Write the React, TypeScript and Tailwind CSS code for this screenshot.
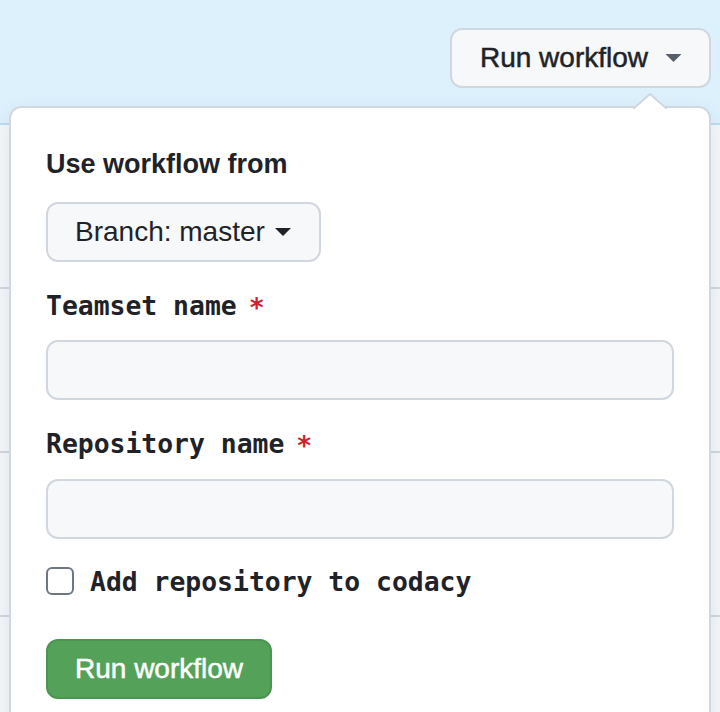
import React from "react";

const sans = { fontFamily: '"Liberation Sans", Arial, sans-serif' };
const mono = { fontFamily: '"DejaVu Sans Mono", "Liberation Mono", monospace' };

function Caret({ className }: { className?: string }) {
  return (
    <svg viewBox="0 0 16 8" className={className} aria-hidden="true">
      <path d="M0 0 L16 0 L8 8 Z" fill="currentColor" />
    </svg>
  );
}

function Label({ text }: { text: string }) {
  return (
    <div className="flex items-center h-[40px] text-[26.4px] font-bold text-[#1f2328]" style={mono}>
      <span>{text}</span>
      <span className="ml-[12px] mt-[3px] text-[#cf222e]">*</span>
    </div>
  );
}

export default function App() {
  return (
    <div className="relative w-[720px] h-[712px] overflow-hidden bg-[#f6f8fa]" style={sans}>
      {/* header band */}
      <div className="h-[125px] bg-[#ddf1fd] border-b-2 border-[#b9dcf5] flex justify-end items-start pt-[28px] pr-[9px]">
        <button className="h-[60px] flex items-center gap-[17px] pl-[28px] pr-[27px] rounded-[12px] border-2 border-[#d0d7de] bg-[#f6f8fa] text-[28px] text-[#1f2328] [-webkit-text-stroke:0.5px_#1f2328]">
          <span>Run workflow</span>
          <Caret className="w-[17px] h-[8px] text-[#57606a]" />
        </button>
      </div>
      {/* background rows */}
      <div className="h-[164px] border-b-2 border-[#d0d7de]" />
      <div className="h-[164px] border-b-2 border-[#d0d7de]" />
      <div className="h-[164px] border-b-2 border-[#d0d7de]" />

      {/* popover */}
      <div className="absolute left-[9px] top-[106px] w-[702px] h-[660px] bg-white border-2 border-[#d0d7de] rounded-[12px] shadow-[0_8px_24px_rgba(140,149,159,0.2)] px-[35px] pt-[36px]">
        <svg
          className="absolute top-[-15px] left-[622px] w-[34px] h-[16px]"
          viewBox="0 0 34 16"
          aria-hidden="true"
        >
          <path d="M0 16 L17 1 L34 16 Z" fill="#ffffff" />
          <path d="M0 16 L17 1 L34 16" fill="none" stroke="#d0d7de" strokeWidth="2" />
        </svg>

        <div className="h-[40px] flex items-center text-[27px] font-bold text-[#1f2328]">
          Use workflow from
        </div>

        <button className="mt-[18px] h-[60px] flex items-center gap-[10px] pl-[27px] pr-[28px] rounded-[12px] border-2 border-[#d0d7de] bg-[#f6f8fa] text-[28px] text-[#1f2328]">
          <span>Branch: master</span>
          <Caret className="w-[16px] h-[8px] text-[#1f2328]" />
        </button>

        <div className="mt-[24px]">
          <Label text="Teamset name" />
        </div>
        <div className="mt-[14px] h-[60px] rounded-[12px] border-2 border-[#d0d7de] bg-[#f6f8fa]" />

        <div className="mt-[24px]">
          <Label text="Repository name" />
        </div>
        <div className="mt-[15px] h-[60px] rounded-[12px] border-2 border-[#d0d7de] bg-[#f6f8fa]" />

        <div className="mt-[22px] h-[40px] flex items-center gap-[16px]">
          <div className="w-[28px] h-[28px] rounded-[6px] border-2 border-[#6e7781] bg-white" />
          <span className="text-[26.4px] font-bold text-[#1f2328] mt-[2px]" style={mono}>
            Add repository to codacy
          </span>
        </div>

        <button className="mt-[38px] h-[60px] px-[27px] rounded-[12px] border-2 border-[#4a9651] bg-[#54a25a] text-white text-[28px] [-webkit-text-stroke:0.5px_#ffffff]">
          Run workflow
        </button>
      </div>
    </div>
  );
}
